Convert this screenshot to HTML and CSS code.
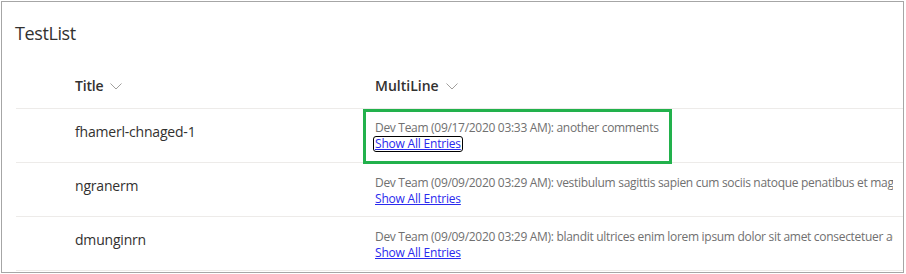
FILE: index.html
```html
<!DOCTYPE html>
<html lang="en">
<head>
  <meta charset="UTF-8" />
  <title>TestList</title>
  <link rel="stylesheet" href="styles.css">
</head>
<body>

<div class="frame">
  <h2 class="list-title">TestList</h2>

  <div class="list">
    <div class="row header">
      <div class="cell name">
        Title
        <svg class="chevron" width="12" height="7" viewBox="0 0 12 7"><path d="M0.5 0.5 L6 6 L11.5 0.5" fill="none" stroke="#a19f9d" stroke-width="1"/></svg>
      </div>
      <div class="cell multi">
        MultiLine
        <svg class="chevron" width="12" height="7" viewBox="0 0 12 7"><path d="M0.5 0.5 L6 6 L11.5 0.5" fill="none" stroke="#a19f9d" stroke-width="1"/></svg>
      </div>
    </div>

    <div class="row">
      <div class="cell name">fhamerl-chnaged-1</div>
      <div class="cell multi">
        <div class="highlight">
          <div class="entry">Dev Team (09/17/2020 03:33 AM): another comments</div>
          <a href="#" class="show-all focused">Show All Entries</a>
        </div>
      </div>
    </div>

    <div class="row">
      <div class="cell name">ngranerm</div>
      <div class="cell multi">
        <div class="entry">Dev Team (09/09/2020 03:29 AM): vestibulum sagittis sapien cum sociis natoque penatibus et magnis dis parturient</div>
        <a href="#" class="show-all">Show All Entries</a>
      </div>
    </div>

    <div class="row">
      <div class="cell name">dmunginrn</div>
      <div class="cell multi">
        <div class="entry">Dev Team (09/09/2020 03:29 AM): blandit ultrices enim lorem ipsum dolor sit amet consectetuer adipiscing</div>
        <a href="#" class="show-all">Show All Entries</a>
      </div>
    </div>
  </div>
</div>

</body>
</html>
```

FILE: styles.css
```css
body {
  margin: 0;
  background: #ffffff;
  font-family: 'Open Sans', 'Noto Sans', sans-serif;
  color: #323130;
}

.frame {
  margin: 1px 0 0 1px;
  width: 901px;
  height: 270px;
  border: 1px solid #a6a6a6;
  overflow: hidden;
}

.list-title {
  margin: 0;
  padding: 19px 0 0 13px;
  height: 42px;
  font-size: 18px;
  font-weight: 400;
  letter-spacing: -0.4px;
  color: #323130;
}

.list {
  margin-left: 14px;
}

.row {
  display: flex;
  height: 53px;
  border-bottom: 1px solid #edebe9;
}

.row.header {
  height: 45px;
  align-items: center;
}

.cell {
  white-space: nowrap;
}

.name {
  width: 359px;
  flex-shrink: 0;
  padding-left: 59px;
  box-sizing: border-box;
  font-size: 14px;
  letter-spacing: -0.2px;
  align-self: center;
  padding-bottom: 8px;
}

.header .name,
.header .multi {
  font-weight: 600;
  font-size: 14px;
  padding-bottom: 0;
  display: flex;
  align-items: center;
}

.chevron {
  margin-left: 7px;
  margin-top: 1px;
}

.multi {
  width: 518px;
}

.highlight {
  width: 294px;
  height: 49px;
  margin: 0 0 0 -12px;
  padding-left: 9px;
  border: 3px solid #22b14c;
}

.entry {
  font-size: 12px;
  letter-spacing: -0.3px;
  color: #707070;
  margin-top: 12px;
  line-height: 16px;
  overflow: hidden;
}

.highlight .entry {
  margin-top: 8px;
}

.show-all {
  display: block;
  width: max-content;
  font-size: 12px;
  letter-spacing: -0.2px;
  line-height: 14px;
  margin-top: 1px;
  color: #2a2aee;
  text-decoration: underline;
}

.focused {
  outline: 1px solid #000000;
  border-radius: 2px;
  margin-left: -1px;
  padding: 0 1px;
}
```
